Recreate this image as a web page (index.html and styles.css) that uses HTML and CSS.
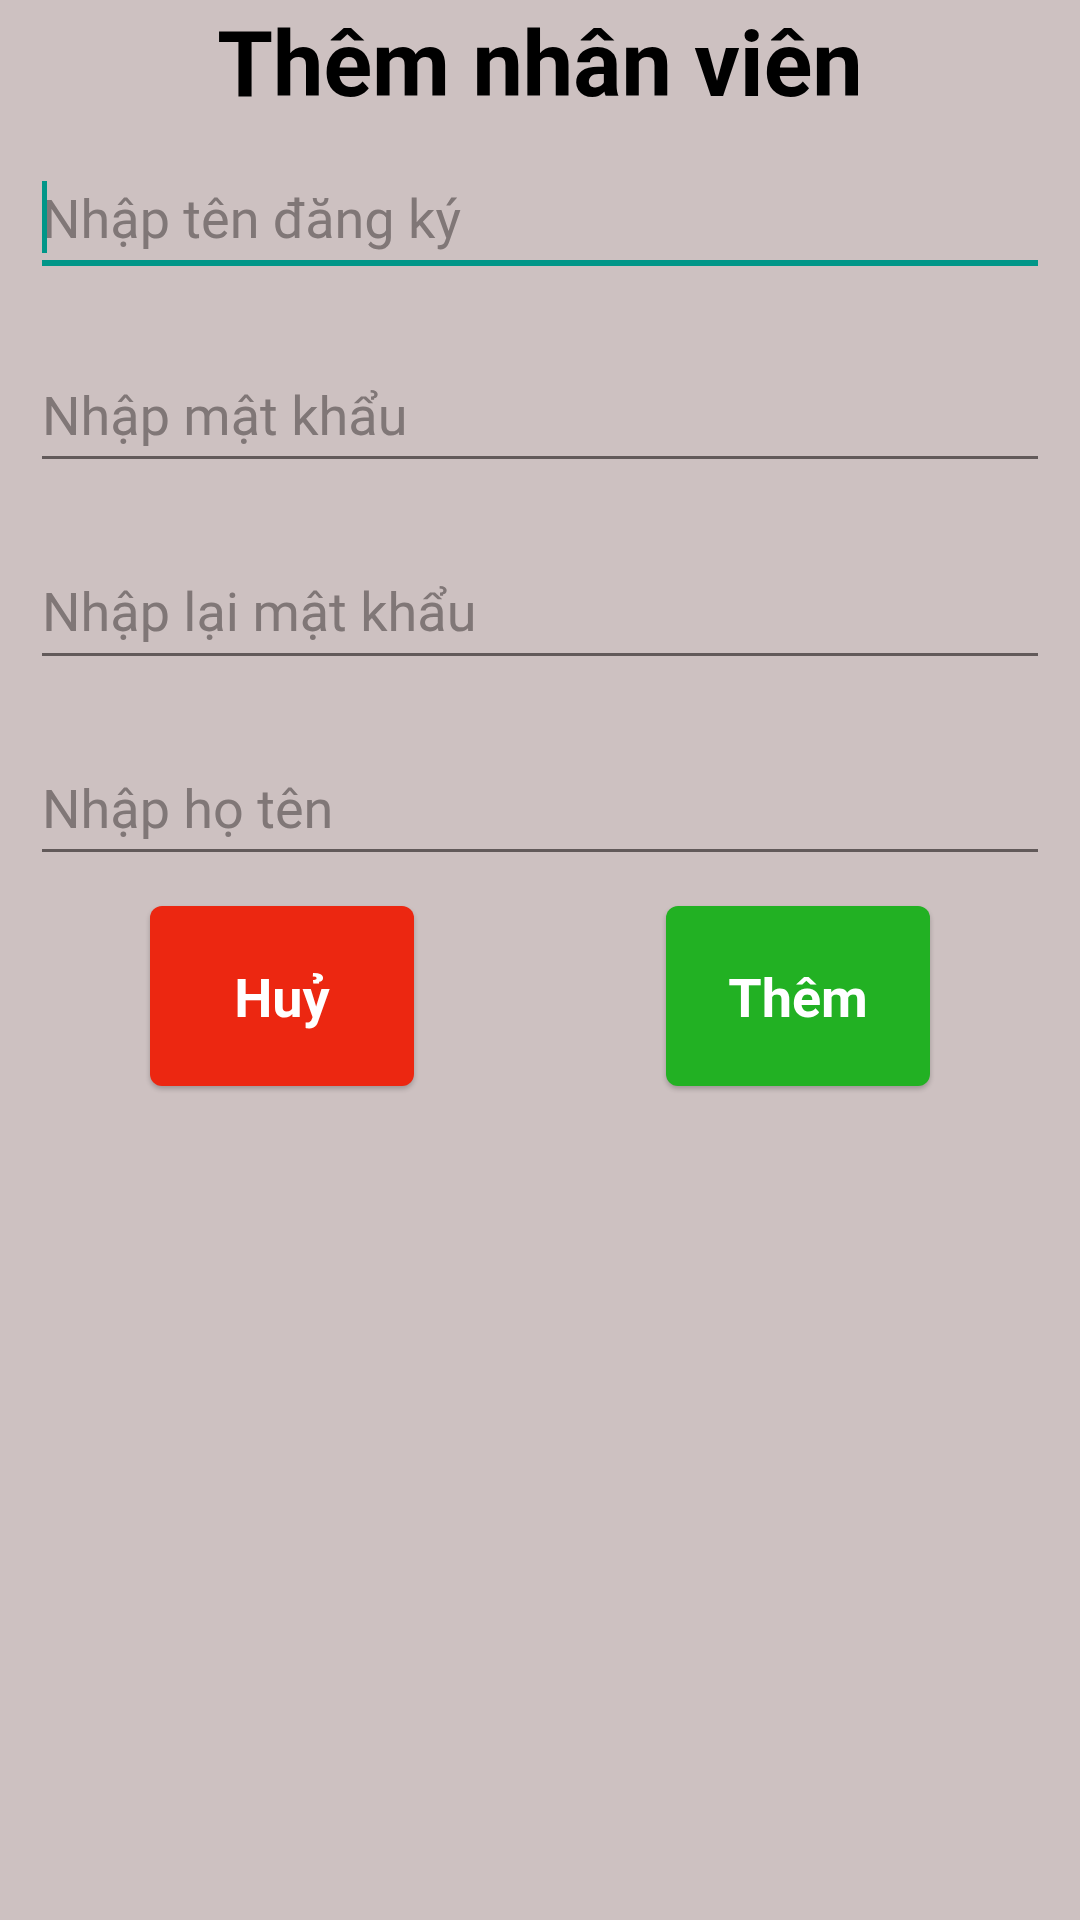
FILE: index.html
```html
<!DOCTYPE html>
<html lang="vi">
<head>
<meta charset="utf-8">
<title>Thêm nhân viên</title>
<link rel="stylesheet" href="styles.css">
</head>
<body>
<main class="screen">
  <h1 class="title">Thêm nhân viên</h1>
  <form class="form">
    <div class="field focused">
      <span class="cursor"></span>
      <span class="placeholder">Nhập tên đăng ký</span>
    </div>
    <div class="field">
      <span class="placeholder">Nhập mật khẩu</span>
    </div>
    <div class="field">
      <span class="placeholder">Nhập lại mật khẩu</span>
    </div>
    <div class="field">
      <span class="placeholder">Nhập họ tên</span>
    </div>
  </form>
  <div class="actions">
    <button type="button" class="btn btn-cancel">Huỷ</button>
    <button type="button" class="btn btn-add">Thêm</button>
  </div>
</main>
</body>
</html>
```

FILE: styles.css
```css
html, body {
  margin: 0;
  padding: 0;
  background: #cdc1c1;
}

body {
  width: 1080px;
  height: 1920px;
  font-family: Roboto, "Noto Sans", "Liberation Sans", sans-serif;
}

.screen {
  display: flex;
  flex-direction: column;
}

.title {
  margin: 13px 0 0;
  font-size: 90px;
  font-weight: 700;
  line-height: 105.5px;
  text-align: center;
  color: #000;
}

.form {
  display: flex;
  flex-direction: column;
  padding: 0 42px;
  margin-top: 69px;
}

.field {
  position: relative;
  height: 64px;
  line-height: 64px;
  font-size: 54px;
  padding-bottom: 7.5px;
  border-bottom: 3px solid #625a5a;
  margin-top: 122px;
}

.field.focused {
  margin-top: 0;
  padding-bottom: 8.5px;
  border-bottom: 6px solid #009688;
}

.field.focused + .field {
  margin-top: 118.5px;
}

.placeholder {
  color: #807777;
  white-space: nowrap;
}

.cursor {
  position: absolute;
  left: 0;
  top: -6.5px;
  width: 5px;
  height: 72px;
  background: #009688;
}

.actions {
  display: flex;
  justify-content: space-between;
  padding: 0 150px;
  margin-top: 54px;
}

.btn {
  width: 264px;
  height: 180px;
  border: none;
  border-radius: 12px;
  padding: 5px 0 0;
  font-family: Roboto, "Noto Sans", "Liberation Sans", sans-serif;
  font-size: 54px;
  font-weight: 700;
  color: #fff;
  box-shadow: 0 3px 5px rgba(0, 0, 0, 0.22);
}

.btn-cancel {
  background: #ec2711;
}

.btn-add {
  background: #22b123;
}
```
